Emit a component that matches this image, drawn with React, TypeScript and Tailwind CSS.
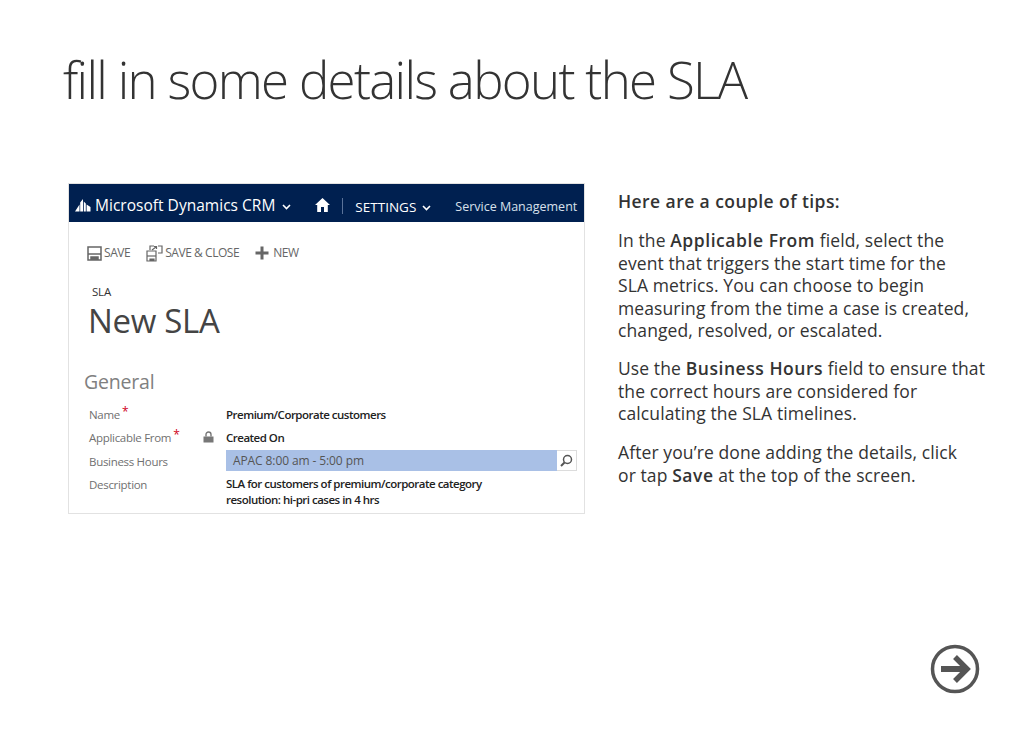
import React from 'react';

const uiFont = "font-['Open_Sans',sans-serif]";

function Chevron({ className }: { className?: string }) {
  return (
    <svg className={className} width="9" height="6" viewBox="0 0 9 6" fill="none">
      <path d="M1 1l3.5 3.5L8 1" stroke="currentColor" strokeWidth="1.6" />
    </svg>
  );
}

function LogoMark() {
  return (
    <svg className="mt-[5px]" width="16" height="13" viewBox="0 0 16 13" fill="#fff">
      <path d="M0 12.5L4.5 5.5v7zM5.2 12.5V3.5L8 0v12.5zM8.8 12.5V2.5l2 2v8zM11.6 12.5V5.5l3.9 2.5v4.5z" />
    </svg>
  );
}

function ToolbarItem({ icon, label }: { icon: React.ReactNode; label: string }) {
  return (
    <div className="flex items-center gap-[2px] text-[12px] tracking-[-0.45px] text-[#666]">
      {icon}
      <span>{label}</span>
    </div>
  );
}

function FormRow({
  label,
  required,
  locked,
  className,
  children,
}: {
  label: string;
  required?: boolean;
  locked?: boolean;
  className?: string;
  children: React.ReactNode;
}) {
  return (
    <div className={`flex items-start ${className ?? ''}`}>
      <div className="relative flex h-[23px] w-[137px] items-center text-[11.5px] tracking-[-0.3px] text-[#707070]">
        <span>{label}</span>
        {required && <span className="mb-[5px] ml-[2px] text-[12px] leading-none text-[#d0021b]">*</span>}
        {locked && (
          <svg className="absolute left-[114px] top-[5px]" width="11" height="12" viewBox="0 0 11 12">
            <path d="M3 5.5V3.5a2.5 2.5 0 015 0v2" fill="none" stroke="#777" strokeWidth="1.4" />
            <rect x="0.5" y="5.5" width="10" height="6" fill="#777" />
          </svg>
        )}
      </div>
      <div className="min-w-0 flex-1">{children}</div>
    </div>
  );
}

function Card() {
  return (
    <div className="flex h-[331px] w-[517px] shrink-0 flex-col border border-[#e2e2e2] bg-white">
      {/* nav bar */}
      <div className="flex h-[38px] shrink-0 items-center bg-[#002050] pl-[6px] text-white">
        <LogoMark />
        <span className="ml-[4px] mt-[6px] text-[15.5px] tracking-[0.02px]">Microsoft Dynamics CRM</span>
        <Chevron className="ml-[7px] mt-[8px]" />
        <svg className="ml-[24px] mt-[3px]" width="15" height="14" viewBox="0 0 15 14" fill="#fff">
          <path d="M7.5 0L15 7h-2.2v7H9V9H6v5H2.2V7H0z" />
        </svg>
        <div className="ml-[12px] mt-[6px] h-[16px] w-px bg-[#5a7299]" />
        <span className="ml-[12px] mt-[8px] text-[13.5px] tracking-[0px]">SETTINGS</span>
        <Chevron className="ml-[6px] mt-[10px]" />
        <span className="ml-[24px] mt-[8px] text-[12.5px] tracking-[0px] text-[#d8e0ec]">Service Management</span>
      </div>

      <div className="flex items-center gap-[16px] pl-[18px] pt-[22px]">
        <ToolbarItem
          label="SAVE"
          icon={
            <svg width="15" height="15" viewBox="0 0 15 15" fill="none" stroke="#666" strokeWidth="1.5">
              <path d="M1 1h13v13H1z" />
              <path d="M1 8h13" />
              <path d="M4 14v-3h7v3" fill="#666" />
            </svg>
          }
        />
        <ToolbarItem
          label="SAVE & CLOSE"
          icon={
            <svg width="17" height="17" viewBox="0 0 17 17" fill="none" stroke="#666" strokeWidth="1.2">
              <path d="M1 6h9v10H1z" />
              <path d="M1 11h9" />
              <path d="M4 16v-2h4v2" fill="#666" />
              <path d="M4 5V1h4M12 1h4v7h-4M6 5l4-3M8 1.5h2.5V4" />
            </svg>
          }
        />
        <ToolbarItem
          label="NEW"
          icon={
            <svg className="mr-[2px]" width="14" height="14" viewBox="0 0 14 14" fill="#666">
              <path d="M5.5 0.5h3v5h5v3h-5v5h-3v-5h-5v-3h5z" />
            </svg>
          }
        />
      </div>

      <div className="pl-[23px] pt-[22px] text-[11.5px] leading-[16px] tracking-[-0.2px] text-[#333]">SLA</div>
      <div className="pl-[19px] text-[33px] leading-[42px] tracking-[-0.3px] text-[#444]">New SLA</div>

      <div className="pl-[15px] pt-[26px] text-[19.5px] leading-[28px] tracking-[-0.2px] text-[#808080]">General</div>

      <div className="flex flex-col pl-[20px] pr-[7px] pt-[7px]">
        <FormRow label="Name" required>
          <div className="flex h-[23px] items-center text-[11.5px] font-semibold tracking-[-0.5px] text-[#222]">
            Premium/Corporate customers
          </div>
        </FormRow>
        <FormRow label="Applicable From" required locked>
          <div className="flex h-[23px] items-center text-[11.5px] font-semibold tracking-[-0.5px] text-[#222]">
            Created On
          </div>
        </FormRow>
        <FormRow label="Business Hours" className="mt-[1px]">
          <div className="flex h-[21px] items-stretch">
            <div className="flex flex-1 items-center bg-[#a9c0e6] pl-[7px] text-[12px] tracking-[-0.1px] text-[#555]">
              APAC 8:00 am - 5:00 pm
            </div>
            <div className="flex w-[20px] items-center justify-center border border-l-0 border-[#dcdcdc] bg-white">
              <svg width="13" height="13" viewBox="0 0 13 13" fill="none" stroke="#555" strokeWidth="1.5">
                <circle cx="7.5" cy="5.5" r="4" />
                <path d="M4.5 8.5L1 12" strokeWidth="2" />
              </svg>
            </div>
          </div>
        </FormRow>
        <FormRow label="Description">
          <div className="pt-[3px] text-[11.5px] font-semibold leading-[16px] tracking-[-0.5px] text-[#222]">
            SLA for customers of premium/corporate category
            <br />
            resolution: hi-pri cases in 4 hrs
          </div>
        </FormRow>
      </div>
    </div>
  );
}

function NextArrow() {
  return (
    <svg width="50" height="50" viewBox="0 0 50 50" fill="none" stroke="#555">
      <circle cx="25" cy="25" r="22.5" strokeWidth="3.5" />
      <path d="M11 25h25" strokeWidth="6" />
      <path d="M25 13l12 12-12 12" strokeWidth="5.5" />
    </svg>
  );
}

export default function App() {
  return (
    <div className={`flex h-[739px] w-[1024px] flex-col overflow-hidden bg-white ${uiFont}`}>
      <h1 className="pl-[63px] pt-[44px] text-[51px] font-light leading-[70px] tracking-[-1.7px] text-[#333]">
        fill in some details about the SLA
      </h1>

      <div className="flex pl-[68px] pt-[69px]">
        <Card />
        <div className="ml-[33px] w-[372px] pt-[7px] text-[17.5px] leading-[22.5px] tracking-[0.1px] text-[#333]">
          <p className="font-semibold tracking-[0.43px]">Here are a couple of tips:</p>
          <p className="mt-[16.5px]">
            In the <b className="font-semibold tracking-[0.55px]">Applicable From</b> field, select the
            <br />
            event that triggers the start time for the
            <br />
            SLA metrics. You can choose to begin
            <br />
            measuring from the time a case is created,
            <br />
            changed, resolved, or escalated.
          </p>
          <p className="mt-[15.5px]">
            Use the <b className="font-semibold tracking-[0.55px]">Business Hours</b> field to ensure that
            <br />
            the correct hours are considered for
            <br />
            calculating the SLA timelines.
          </p>
          <p className="mt-[16.5px]">
            After you’re done adding the details, click
            <br />
            or tap <b className="font-semibold tracking-[0.55px]">Save</b> at the top of the screen.
          </p>
        </div>
      </div>

      <div className="flex flex-1 items-start justify-end pr-[44px] pt-[130px]">
        <NextArrow />
      </div>
    </div>
  );
}
